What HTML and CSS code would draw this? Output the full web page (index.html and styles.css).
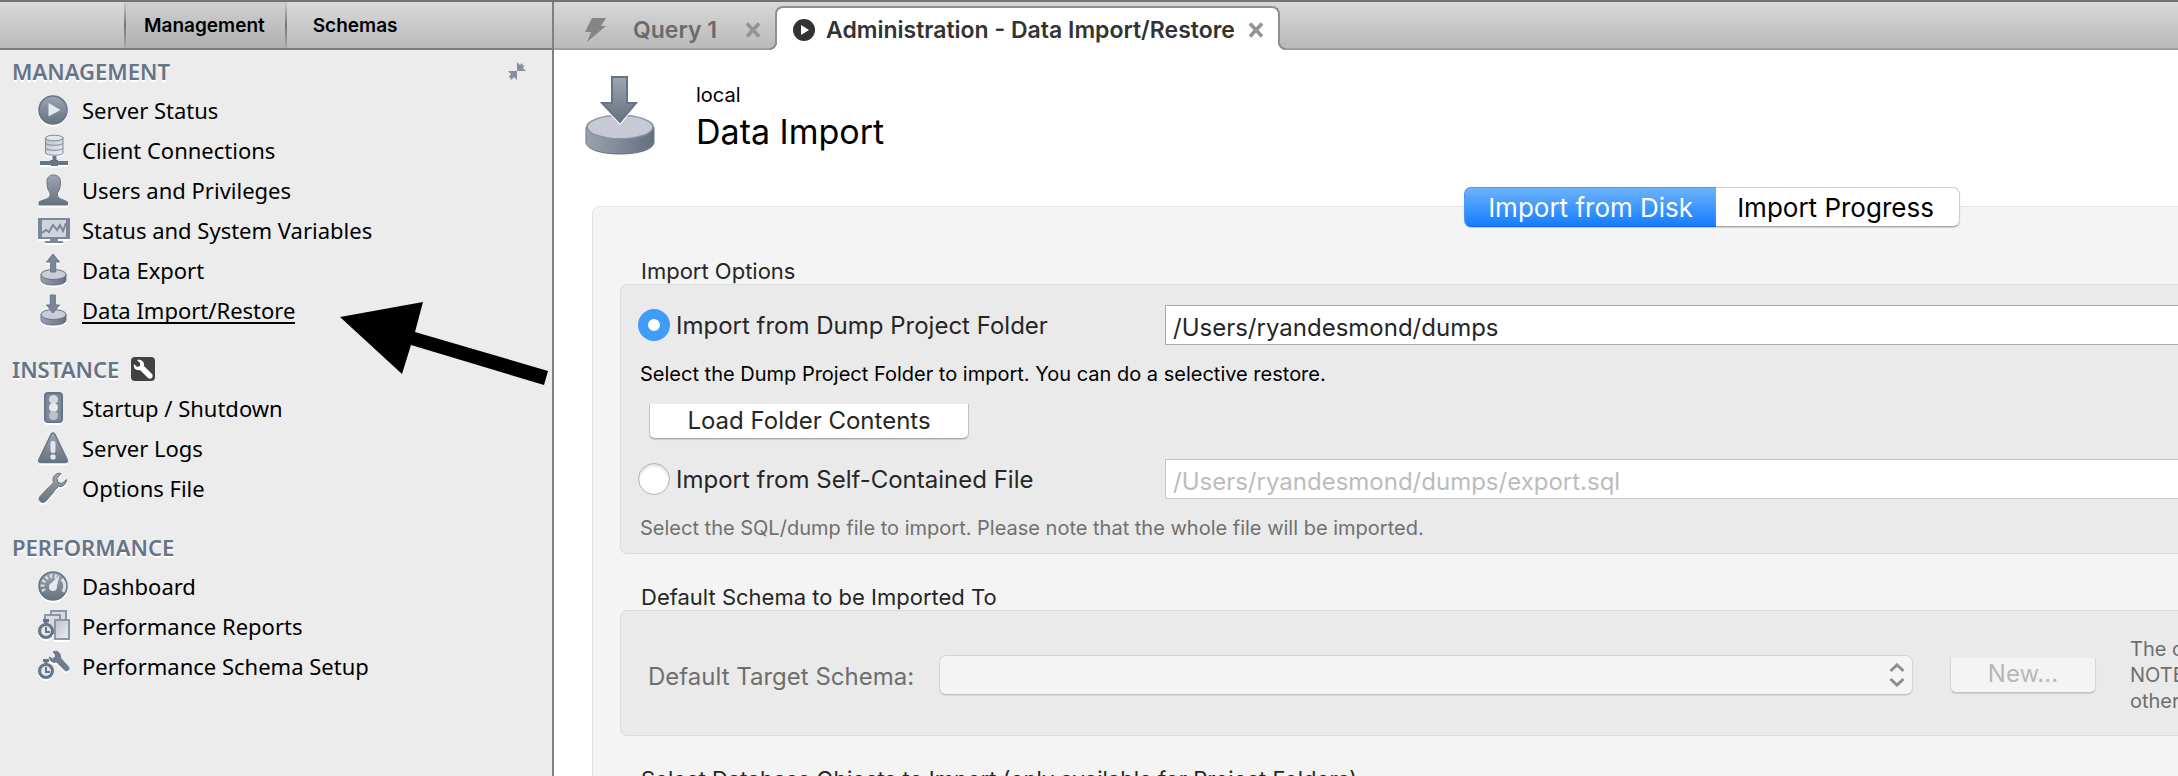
FILE: index.html
```html
<!DOCTYPE html>
<html lang="en">
<head>
<meta charset="utf-8">
<title>Administration - Data Import/Restore</title>
<link rel="stylesheet" href="styles.css">
</head>
<body>
<svg class="defs" aria-hidden="true">
  <defs>
    <linearGradient id="steel" x1="0" y1="0" x2="0" y2="1"><stop offset="0" stop-color="#9da5b1"/><stop offset="1" stop-color="#66727f"/></linearGradient>
    <linearGradient id="side" x1="0" y1="0" x2="1" y2="0"><stop offset="0" stop-color="#9aa2ae"/><stop offset="1" stop-color="#64707f"/></linearGradient>
    <linearGradient id="pale" x1="0" y1="0" x2="1" y2="1"><stop offset="0" stop-color="#b9bfcb"/><stop offset="1" stop-color="#eef0f4"/></linearGradient>
    <symbol id="disk" viewBox="0 0 32 32">
      <path d="M3 20v6c0 3 5 5 12.500 5s12.500-2 12.500-5v-6z" fill="url(#side)" stroke="#667487"/>
      <ellipse cx="15.500" cy="20.500" rx="12.500" ry="5" fill="#c9cdd7" stroke="#667487"/>
    </symbol>
    <symbol id="watch" viewBox="0 0 32 32">
      <path d="M5 9h6v3H9.500v3h-3v-3H5z" fill="#667487"/>
      <circle cx="8" cy="21" r="6.500" fill="#e3e6eb" stroke="#667487" stroke-width="3"/>
      <path d="M8 17v5h4" fill="none" stroke="#667487" stroke-width="2"/>
    </symbol>
    <symbol id="wrench" viewBox="0 0 32 32">
      <path d="M28.500 7.500l-4.500 4-4-1-1-4 4-5c-4-1-8 2-8 6 0 1 0 2 .5 3l-4 4.500-1.500 1-8 8.500c-3 4 2 8 5.500 5l8-9 1-2 4-4c5 1 8-3 8-7z" fill="url(#steel)" stroke="#667487" stroke-linejoin="round"/>
    </symbol>
  </defs>
</svg>
<div class="window">
  <aside class="sidebar">
    <div class="switcher" role="tablist">
      <button class="switch switch-on" role="tab" aria-selected="true">Management</button>
      <button class="switch" role="tab">Schemas</button>
    </div>
    <nav class="nav">
      <section class="section">
        <h2 class="heading">MANAGEMENT
          <svg class="collapse" viewBox="0 0 18 18"><path d="M9 9V0l3 3 2-2 1 3 2-1-2 3 3 3zM9 9v9l-3-3-3 3-1-3-2 1 3-4-3-3z" fill="#8490a0"/></svg>
        </h2>
        <a class="item" href="#"><svg class="icon" viewBox="0 0 32 32"><circle cx="15" cy="16" r="14" fill="url(#steel)" stroke="#667487" stroke-width="1.500"/><path d="M10.500 9v13.500L22.500 16z" fill="#e6e9ee"/></svg>Server Status</a>
        <a class="item" href="#"><svg class="icon" viewBox="0 0 32 32"><path d="M7.500 4v15c0 3 17.500 3 17.500 0V4z" fill="url(#pale)" stroke="#7d8897"/><ellipse cx="16.250" cy="4" rx="8.750" ry="2.800" fill="#e4e7ec" stroke="#7d8897"/><path d="M7.500 9c0 3 17.500 3 17.500 0M7.500 14c0 3 17.500 3 17.500 0" fill="none" stroke="#7d8897"/><path d="M14.500 22h4v4h-4zM2 27h28v4H20v1h-7v-1H2zM12 26h8v2h-8z" fill="#667487"/></svg>Client Connections</a>
        <a class="item" href="#"><svg class="icon" viewBox="0 0 32 32"><path d="M1 31v-3c3-2 10-3 11-6v-3C9.500 16 9 12 9 8c0-4 2-7 6.500-7S22.500 4 22.500 8c0 4-.5 8-3 11v3c1 3 7 4 10 6v3z" fill="url(#steel)" stroke="#667487"/></svg>Users and Privileges</a>
        <a class="item" href="#"><svg class="icon" viewBox="0 0 32 32"><path d="M0 4h32v21H0zM12 25h8v2h5v2H7v-2h5z" fill="#7c8898"/><path d="M4 6h24v17H4z" fill="#cfd4dc"/><path d="M4 19l4-3 3 2 4-7 4 5 3-5 3 6 3-8" fill="none" stroke="#7c8898" stroke-width="2"/></svg>Status and System Variables</a>
        <a class="item" href="#"><svg class="icon" viewBox="0 0 32 32"><use href="#disk"/><path d="M15 0l6.500 8h-3.800v10h-5V8H8.500z" fill="#7b8797" stroke="#667487"/></svg>Data Export</a>
        <a class="item" href="#"><svg class="icon" viewBox="0 0 32 32"><use href="#disk"/><path d="M15 19L8.500 11h3.800V1h5v10h4.200z" fill="#7b8797" stroke="#667487"/></svg><span class="marked">Data Import/Restore</span></a>
      </section>
      <section class="section">
        <h2 class="heading">INSTANCE
          <svg class="badge" viewBox="0 0 24 24"><rect width="24" height="24" rx="4" fill="#424242"/><path d="M6 3l3 3v3L6 10 3 7c-1 4 2 7 6 6l8 8c3 2 6-1 4-4l-8-8c1-4-3-7-7-6z" fill="#fff"/></svg>
        </h2>
        <a class="item" href="#"><svg class="icon" viewBox="0 0 32 32"><rect x="7" y="1" width="17" height="29" rx="3" fill="#7d8898" stroke="#667487" stroke-width="2"/><circle cx="15.500" cy="7.500" r="4.500" fill="#d5d9e0"/><circle cx="15.500" cy="15.500" r="4.500" fill="#e6e9ee"/><circle cx="15.500" cy="23.500" r="4.500" fill="#bcc2cd"/></svg>Startup / Shutdown</a>
        <a class="item" href="#"><svg class="icon" viewBox="0 0 32 32"><path d="M13 2.500c1-2 3-2 4 0l12 25c.8 2 0 3-2 3H3c-2 0-2.800-1-2-3z" fill="url(#steel)" stroke="#667487" stroke-width="1.500"/><rect x="12.500" y="9" width="5" height="12" rx="2" fill="#e3e6eb"/><circle cx="15" cy="25" r="2.700" fill="#e3e6eb"/></svg>Server Logs</a>
        <a class="item" href="#"><svg class="icon" viewBox="0 0 32 32"><use href="#wrench"/></svg>Options File</a>
      </section>
      <section class="section">
        <h2 class="heading">PERFORMANCE</h2>
        <a class="item" href="#"><svg class="icon" viewBox="0 0 32 32"><circle cx="15" cy="16" r="14" fill="url(#steel)" stroke="#667487" stroke-width="1.500"/><path d="M6 21A10 10 0 0 1 19 7" fill="none" stroke="#dfe3e8" stroke-width="4" stroke-dasharray="2 2.500"/><path d="M24 9a11.500 11.500 0 0 1 1 13" fill="none" stroke="#dfe3e8" stroke-width="3"/><circle cx="15" cy="17" r="4" fill="#e6e9ee"/><path d="M11.500 15L21.500 5l-3 13z" fill="#e6e9ee"/></svg>Dashboard</a>
        <a class="item" href="#"><svg class="icon" viewBox="0 0 32 32"><path d="M13 1h15v20H13z" fill="#d6dae1" stroke="#8c96a4" stroke-width="2"/><path d="M7 5h15v18H7z" fill="#d6dae1" stroke="#8c96a4" stroke-width="2"/><path d="M17 10h14v19H17z" fill="url(#pale)" stroke="#8c96a4" stroke-width="2"/><use href="#watch"/></svg>Performance Reports</a>
        <a class="item" href="#"><svg class="icon" viewBox="0 0 32 32"><path d="M15 2c3-2 8 0 7.500 6l8 9c2 3-2 5-4 3l-8-8c-4 1-7-1-7-5l3 2 3-2-.5-3z" fill="#6f7c8d" stroke="#667487"/><use href="#watch"/></svg>Performance Schema Setup</a>
      </section>
    </nav>
    <svg class="pointer" viewBox="0 0 208 84" aria-hidden="true"><path d="M0 15L83 0 75 30 208 69 204 83 71 43 62 72z"/></svg>
  </aside>

  <main class="main">
    <div class="tabs" role="tablist">
      <div class="tab">
        <svg class="bolt" viewBox="0 0 22 24"><path d="M7 0h14l-5 8h5L2 24l4-10H0z" fill="#858585"/></svg>
        <button class="tab-name" role="tab">Query 1</button>
        <button class="close" aria-label="Close Query 1"><svg class="cross" viewBox="0 0 16 16"><path d="M2 1.500l12 13M14 1.500l-12 13" stroke="#949494" stroke-width="3.600"/></svg></button>
      </div>
      <div class="tab tab-on">
        <svg class="play" viewBox="0 0 22 22"><circle cx="11" cy="11" r="11" fill="#333"/><path d="M8 6v10l8-5z" fill="#fff"/></svg>
        <button class="tab-name" role="tab" aria-selected="true">Administration - Data Import/Restore</button>
        <button class="close" aria-label="Close Administration"><svg class="cross" viewBox="0 0 16 16"><path d="M2 1.500l12 13M14 1.500l-12 13" stroke="#949494" stroke-width="3.600"/></svg></button>
      </div>
    </div>
    <header class="title">
      <svg class="title-icon" viewBox="0 0 70 80">
        <path d="M1 51v15c0 7 14 12 34 12s34-5 34-12V51z" fill="url(#side)" stroke="#667487"/>
        <ellipse cx="35" cy="51" rx="34" ry="12.500" fill="#8a94a2"/>
        <ellipse cx="35" cy="51" rx="32" ry="11" fill="#c6cad4"/>
        <path d="M27 1h15v26h9L35 46 17 27h10z" fill="url(#steel)" stroke="#fff" stroke-width="4"/>
        <path d="M27 1h15v26h9L35 46 17 27h10z" fill="url(#steel)" stroke="#667487" stroke-width="2"/>
      </svg>
      <div>
        <p class="server">local</p>
        <h1 class="name">Data Import</h1>
      </div>
    </header>
    <div class="sheet">
      <div class="segments" role="tablist">
        <button class="segment segment-on" role="tab" aria-selected="true">Import from Disk</button>
        <button class="segment" role="tab">Import Progress</button>
      </div>
      <div class="panel">
        <h3 class="legend">Import Options</h3>
        <div class="group options">
          <div class="row">
            <label class="choice"><input class="radio" type="radio" name="source" checked>Import from Dump Project Folder</label>
            <input class="path" type="text" value="/Users/ryandesmond/dumps" aria-label="Dump project folder">
          </div>
          <p class="help">Select the Dump Project Folder to import. You can do a selective restore.</p>
          <button class="button load">Load Folder Contents</button>
          <div class="row">
            <label class="choice"><input class="radio" type="radio" name="source">Import from Self-Contained File</label>
            <input class="path" type="text" value="/Users/ryandesmond/dumps/export.sql" aria-label="Self-contained file" disabled>
          </div>
          <p class="help help-off">Select the SQL/dump file to import. Please note that the whole file will be imported.</p>
        </div>
        <h3 class="legend">Default Schema to be Imported To</h3>
        <div class="group target">
          <label class="target-label" for="schema">Default Target Schema:</label>
          <div class="picker">
            <select class="select" id="schema" disabled><option></option></select>
            <svg class="arrows" viewBox="0 0 16 24"><path d="M1.500 8L8 2l6.500 6M1.500 16L8 22l6.500-6" fill="none" stroke="#8e8e8e" stroke-width="3"/></svg>
          </div>
          <button class="button new" disabled>New...</button>
          <p class="note">The default schema to import the dump into.<br>NOTE: this is only used if the dump file doesn't contain its schema,<br>otherwise it is ignored.</p>
        </div>
        <h3 class="legend">Select Database Objects to Import (only available for Project Folders)</h3>
      </div>
    </div>
  </main>
</div>
</body>
</html>
```
FILE: styles.css
```css
* { box-sizing: border-box; }
html, body { height: 100%; }
body { margin: 0; overflow: hidden; background: #fff; font-family: Inter, "Liberation Sans", sans-serif; color: #262626; }
h1, h2, h3, p { margin: 0; font-weight: 400; }
button, input, select { font: inherit; margin: 0; }
button { border: 0; padding: 0; background: none; color: inherit; }
svg { display: block; flex: none; }
.defs { position: absolute; width: 0; height: 0; }

.window { display: flex; height: 100vh; overflow: hidden; border-top: 2px solid #737373; }

.sidebar { position: relative; flex: 0 0 554px; background: #ececec; border-right: 2px solid #808080; }
.switcher { display: flex; height: 48px; padding-left: 124px; background: linear-gradient(#dadada, #b9b9b9); border-bottom: 2px solid #7e7e7e; }
.switch { padding: 0 26px; font-size: 19px; font-weight: 600; color: #000; }
.switch-on { padding: 0 20px 0 18px; background: linear-gradient(#d0d0d0, #b0b0b0); border: solid; border-width: 0 2px; border-image: linear-gradient(#cfcfcf, #757575 50%, #aaa) 1; }
.nav { padding-top: 2px; font-family: "Noto Sans", "Open Sans", sans-serif; }
.section { margin-bottom: 20px; }
.heading { display: flex; align-items: center; gap: 12px; height: 38px; padding: 0 26px 0 12px; font-size: 22px; font-weight: 600; color: #667487; text-shadow: 0 2px 0 #fff; }
.collapse { width: 18px; height: 18px; margin-left: auto; }
.badge { width: 24px; height: 24px; }
.item { display: flex; align-items: center; gap: 12px; height: 40px; padding-left: 38px; font-size: 22px; color: #000; text-decoration: none; }
.icon { width: 32px; height: 32px; filter: drop-shadow(0 2px 0 #fff); }
.marked { margin-top: 2px; line-height: 24px; border-bottom: 2px solid #000; }
.pointer { position: absolute; left: 340px; top: 300px; width: 208px; height: 84px; }

.main { flex: 1; min-width: 0; overflow: hidden; }
.tabs { display: flex; height: 48px; background: linear-gradient(#d8d8d8, #b8b8b8); box-shadow: inset 0 -2px 0 #a0a0a0; }
.tab { display: flex; align-items: center; padding: 8px 14px 0 31px; font-size: 23px; font-weight: 600; color: #6b6b6b; }
.tab .tab-name { margin: 0 28px 0 26px; }
.tab-on { position: relative; margin-top: 4px; padding: 2px 14px 0 16px; background: #fff; border: 2px solid #8f8f8f; border-bottom: 0; border-radius: 8px 8px 0 0; color: #333; }
.tab-on::before, .tab-on::after { content: ""; position: absolute; bottom: 0; width: 8px; height: 8px; }
.tab-on::before { left: -8px; background: radial-gradient(circle at 0 0, #bababa 6px, #8f8f8f 6px 8px, #fff 8px); }
.tab-on::after { right: -8px; background: radial-gradient(circle at 100% 0, #bababa 6px, #8f8f8f 6px 8px, #fff 8px); }
.tab-on .tab-name { margin: 0 13px 0 11px; }
.bolt { width: 22px; height: 24px; }
.play { width: 22px; height: 22px; }
.cross { width: 16px; height: 16px; }

.title { display: flex; gap: 41px; height: 137px; padding: 26px 0 0 31px; color: #000; }
.title-icon { width: 70px; height: 80px; }
.server { padding-top: 6px; font-size: 20px; line-height: 26px; }
.name { font-size: 34px; line-height: 48px; }

.sheet { margin: 0 -654px 0 38px; }
.segments { position: relative; display: flex; justify-content: center; height: 40px; }
.segment { padding: 0 25px 0 21px; font-size: 26px; color: #000; background: #fff; border: 1px solid #cdcdcd; border-bottom-color: #aaa; border-left: 0; border-radius: 0 7px 7px 0; box-shadow: 0 1px 1px #ccc; }
.segment-on { padding: 0 23px; color: #fff; background: linear-gradient(#6db3fa, #147dfe); border: 1px solid #4a9af5; border-bottom-color: #0a62f5; border-right: 0; border-radius: 7px 0 0 7px; }
.panel { margin-top: -21px; padding: 51px 28px 40px 27px; min-height: 620px; background: #f4f4f4; border: 1px solid #e2e2e2; border-radius: 8px; }
.legend { padding-left: 21px; font-size: 22px; line-height: 26px; }
.group { margin-bottom: 30px; background: #eaeaea; border: 1px solid #dcdcdc; border-radius: 7px; }
.options { padding: 20px 0 13px 17px; }
.row { display: flex; align-items: center; height: 40px; }
.choice { display: flex; align-items: center; gap: 6px; flex: 0 0 527px; font-size: 24px; }
.radio { appearance: none; width: 32px; height: 32px; background: #fff; border: 1px solid #b4b4b4; border-radius: 50%; box-shadow: inset 0 2px 3px #ddd; }
.radio:checked { background: #fff; border: 10px solid #419bf9; box-shadow: none; }
.path { flex: 1; height: 40px; padding: 5px 7px 0; font-size: 24px; color: #262626; background: #fff; border: 1px solid #ababab; border-right: 0; border-radius: 0; }
.path:disabled { color: #bcbcbc; border-color: #c6c6c6; }
.help { margin-top: 17px; padding-left: 2px; font-size: 20px; line-height: 24px; color: #000; }
.help-off { color: #707070; }
.button { display: block; height: 35px; padding-bottom: 2px; background: #fff; border: 1px solid #c4c4c4; border-top: 0; border-bottom-color: #a8a8a8; border-radius: 0 0 6px 6px; box-shadow: 0 1px 1px #ccc; }
.load { width: 320px; margin: 18px 0 20px 11px; font-size: 24px; }
.target { display: flex; align-items: center; height: 126px; padding: 4px 0 0 27px; }
.target-label { flex: 0 0 291px; padding-top: 2px; font-size: 24px; color: #6e6e6e; }
.picker { position: relative; flex: 0 1 974px; }
.select { appearance: none; display: block; width: 100%; height: 40px; background: #f4f4f4; border: 1px solid #d6d6d6; border-bottom-color: #c2c2c2; border-radius: 7px; box-shadow: 0 1px 1px #d8d8d8; opacity: 1; }
.arrows { position: absolute; right: 8px; top: 8px; width: 16px; height: 24px; }
.new { width: 146px; margin: 0 34px 0 37px; font-size: 24px; color: #b8b8b8; background: #f4f4f4; border-color: #d6d6d6; border-bottom-color: #c4c4c4; }
.note { font-size: 20px; line-height: 26px; color: #6e6e6e; white-space: nowrap; }
```
